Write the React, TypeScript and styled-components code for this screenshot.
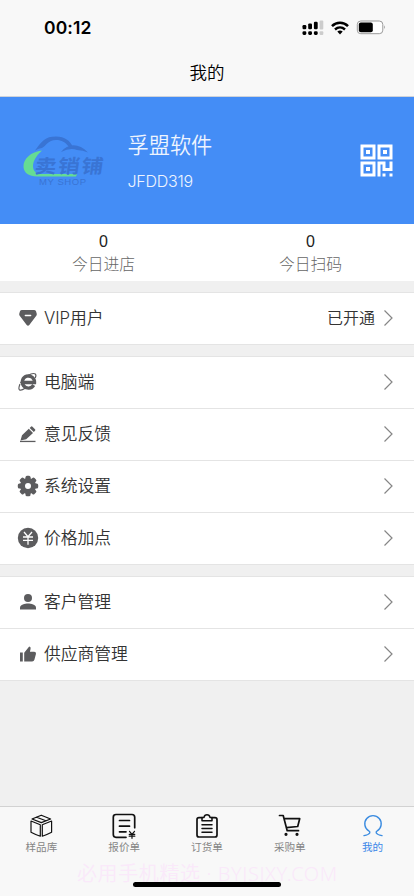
import React from 'react';
import styled, { createGlobalStyle } from 'styled-components';

const GlobalStyle = createGlobalStyle`
  * { box-sizing: border-box; }
  body {
    margin: 0;
    background: #f0f0f0;
    font-family: Inter, "Noto Sans CJK SC", sans-serif;
    font-weight: 350;
    color: #333;
  }
`;

const Screen = styled.div`
  width: 414px;
  height: 896px;
  display: flex;
  flex-direction: column;
  overflow: hidden;
  background: #f0f0f0;
`;

const Header = styled.header`
  height: 97px;
  background: #f8f8f8;
  border-bottom: 1px solid #cfd3da;
`;

const StatusBar = styled.div`
  height: 50px;
  padding: 5px 28px 0 44px;
  display: flex;
  align-items: center;
  justify-content: space-between;
`;

const Clock = styled.span`
  font: 600 17.5px/22px Inter, sans-serif;
  letter-spacing: 0.1px;
  color: #000;
`;

const StatusIcons = styled.div`
  display: flex;
  align-items: center;
  gap: 7px;
`;

const PageTitle = styled.h1`
  margin: 0;
  font-size: 17.5px;
  font-weight: 350;
  line-height: 46px;
  text-align: center;
  color: #000;
`;

const Banner = styled.section`
  height: 127px;
  background: #448df6;
  display: flex;
  align-items: center;
  padding: 0 21px 0 23px;
`;

const Profile = styled.div`
  flex: 1;
  padding: 1px 0 0 22.5px;
  color: #eef4fe;
`;

const ShopName = styled.div`
  font-size: 21.2px;
  line-height: 30px;
`;

const ShopCode = styled.div`
  margin-top: 9px;
  font: 300 16px/24px Inter, sans-serif;
  letter-spacing: -0.25px;
`;

const Stats = styled.section`
  height: 57px;
  display: grid;
  grid-template-columns: 1fr 1fr;
  background: #fff;
  text-align: center;
`;

const StatValue = styled.div`
  padding-top: 7px;
  font: 400 16px/21px "Liberation Sans", sans-serif;
  color: #222;
`;

const StatLabel = styled.div`
  font-size: 15.8px;
  font-weight: 300;
  line-height: 25px;
  color: #666;
`;

const Group = styled.section`
  margin-top: 11px;
  border-top: 1px solid #e4e4e4;
  background: #fff;
`;

const Row = styled.div`
  height: 52px;
  padding: 0 20px 1px 17px;
  display: flex;
  align-items: center;
  border-bottom: 1px solid #e4e4e4;
`;

const RowIcon = styled.span`
  width: 22px;
  height: 22px;
  margin-right: 5px;
  display: flex;
  color: #5c5c5e;
`;

const RowLabel = styled.span`
  flex: 1;
  font-size: 16.8px;
  letter-spacing: -0.05px;
  line-height: 26px;
`;

const RowValue = styled.span`
  margin-right: 9px;
  font-size: 16px;
  line-height: 26px;
`;

const TabBar = styled.nav`
  margin-top: auto;
  position: relative;
  height: 90px;
  display: grid;
  grid-template-columns: repeat(5, 1fr);
  background: #f8f8f8;
  border-top: 1px solid #d2d2d2;
`;

const Tab = styled.div<{ $active?: boolean }>`
  padding-top: 6px;
  display: flex;
  flex-direction: column;
  align-items: center;
  color: ${(p) => (p.$active ? '#3a8be0' : '#111')};
`;

const TabLabel = styled.span<{ $active?: boolean }>`
  font-size: 10.6px;
  font-weight: 400;
  line-height: 15px;
  color: ${(p) => (p.$active ? '#3a86e8' : '#858585')};
`;

const Watermark = styled.div`
  position: absolute;
  left: 77px;
  top: 53px;
  font: 350 20px/28px "Noto Sans", "Noto Sans CJK SC", sans-serif;
  letter-spacing: 0.6px;
  white-space: nowrap;
  color: #fae9fa;
`;

const HomeIndicator = styled.div`
  position: absolute;
  left: 133px;
  bottom: 9px;
  width: 148px;
  height: 5px;
  border-radius: 3px;
  background: #000;
`;

const Signal = () => (
  <svg width="22" height="16" viewBox="0 0 22 16">
    {[0, 5.7, 11.4].map((x, i) => (
      <g key={x}>
        <rect x={x + 0.5} y="11.2" width="3.8" height="3.7" rx="1.3" />
        <rect x={x + 0.5} y={5 - i * 1.6} width="3.8" height={4.3 + i * 1.6} rx="1.2" />
      </g>
    ))}
    <rect x="17.6" y="0.5" width="3.7" height="9" rx="1" fill="#ccc" />
    <rect x="17.6" y="11.2" width="3.7" height="3.7" rx="1" fill="#ccc" />
  </svg>
);

const Wifi = () => (
  <svg width="18" height="14" viewBox="0 0 18 14" fill="none" stroke="#000">
    <path d="M1 5.1C5.5.7 12.5.7 17 5.1" strokeWidth="2.6" />
    <path d="M4 8.5C7 5.7 11 5.7 14 8.5" strokeWidth="2.4" />
    <path d="M9 13.5L6.3 10.6Q9 8.6 11.7 10.6Z" fill="#000" stroke="none" />
  </svg>
);

const Battery = () => (
  <svg width="30" height="15" viewBox="0 0 30 15">
    <rect x="1.3" y="1" width="25.5" height="12.7" rx="3.5" fill="#fff" stroke="#999" />
    <rect x="2.8" y="2.5" width="14" height="9.7" rx="2" />
    <path d="M28 5.3Q29.8 7.3 28 9.3Z" fill="#888" />
  </svg>
);

const ShopLogo = () => (
  <svg width="82" height="56" viewBox="0 0 82 56" overflow="visible">
    <g fill="#3974d4">
      <path d="M12 17.500C19 8 22 3.500 33 3.500C42 3.500 47 8 49.500 13L46 14C42 9 39 7 33 7C25 7 23 13 19 15Q16 15 12 17.500Z" />
      <path d="M38 19C45 10 56 10 65 19.500Q60 17 54 17Q47 14.500 38 19Z" />
    </g>
    <path
      d="M19 17.500C8 18.500 0 26 .5 34C1 40 6 43.500 14 43.500H53L54 41H18C8.500 40.500 6 29 19 17.500Z"
      fill="#65dc94"
    />
    <text
      transform="translate(11 39.500) skewX(-8) scale(1.14 1)"
      fontFamily="Noto Sans CJK SC, sans-serif"
      fontSize="19"
      fontWeight="700"
      letterSpacing="1.5"
      fill="#3974d4"
    >
      卖销铺
    </text>
    <text x="16" y="52" fontFamily="Liberation Sans, sans-serif" fontSize="9.5" textLength="47" fill="#3974d4">
      MY SHOP
    </text>
  </svg>
);

const QrCode = () => (
  <svg width="33" height="33" viewBox="0 0 33 33" fill="none" stroke="#fff" strokeWidth="3">
    <path d="M2 2h12v12H2zM19 2h12v12H19zM2 19h12v12H2z" />
    <path d="M6 6h4v4H6zM23 6h4v4h-4zM6 23h4v4H6zM22.5 29.5h3v3h-3zM29.5 29.5h3v3h-3z" fill="#fff" stroke="none" />
    <path d="M19 32.500V19h5v6.500H31v-8" />
  </svg>
);

const Chevron = () => (
  <svg width="10" height="18" viewBox="0 0 10 18" fill="none" stroke="#868686" strokeWidth="1.2">
    <path d="M.5 1.500L8 9L.5 16.500" />
  </svg>
);

const Glyph = ({ children }: { children: React.ReactNode }) => (
  <svg width="22" height="22" viewBox="0 0 22 22" fill="currentColor">
    {children}
  </svg>
);

const Diamond = () => (
  <Glyph>
    <path d="M5 3h12q1.500 0 2 1.300l.7 2.200q.4 1.500-.6 2.600L12.300 18q-1.300 1.500-2.600 0L2.900 9.100q-1-1.100-.6-2.600L3 4.300q.5-1.300 2-1.300Z" />
    <path d="M8.300 8.500h5.400" stroke="#fff" strokeWidth="1.300" strokeLinecap="round" />
  </Glyph>
);

const Browser = () => (
  <Glyph>
    <path
      d="M16.700 14.100A6.100 6.100 0 1 1 17.500 11.500H7"
      fill="none"
      stroke="currentColor"
      strokeWidth="3.4"
    />
    <path
      d="M3.500 12C7 6.500 15 .7 18.400 3.100Q19.500 4.100 18.200 7M3 13Q1 18 2.600 18.900Q4.300 19.900 8 17.300"
      fill="none"
      stroke="currentColor"
      strokeWidth="1.2"
    />
  </Glyph>
);

const Pencil = () => (
  <Glyph>
    <path d="M3.500 17.500l1.500-5.200 6.800-6.600 4.200 4.200-6.800 6.300ZM12.700 4.900l1.200-1.200q.8-.7 1.600 0l2.500 2.500q.8.800 0 1.600l-1.200 1.200Z" />
    <path d="M3 17.800h15.500v1.300H3z" />
  </Glyph>
);

const Gear = () => (
  <Glyph>
    {[0, 45, 90, 135, 180, 225, 270, 315].map((angle) => (
      <rect key={angle} x="8.500" y="0.8" width="5" height="6" rx="1.5" transform={`rotate(${angle} 11 11)`} />
    ))}
    <circle cx="11" cy="11" r="5.5" fill="none" stroke="currentColor" strokeWidth="5" />
  </Glyph>
);

const Yen = () => (
  <Glyph>
    <circle cx="11" cy="11" r="10.2" />
    <path d="M7 5l4 4.700L15 5M6 10h10M6 13.400h10M11 9.700v8" fill="none" stroke="#fff" strokeWidth="1.3" />
  </Glyph>
);

const Person = () => (
  <Glyph>
    <circle cx="11" cy="7" r="4" />
    <path d="M3 18.500v-2C3 13.500 8 12.400 11 12.400s8 1.100 8 4.100v2Z" />
  </Glyph>
);

const Thumb = () => (
  <Glyph>
    <path d="M3 9.500h2.800v9H3zM7.200 9.700l5-6.300q1.900.5 1.400 2.300l-.7 3h4.300q2 0 1.800 2l-1.600 6q-.5 1.800-2.300 1.800H7.200Z" />
  </Glyph>
);

const TabIcon = ({ children }: { children: React.ReactNode }) => (
  <svg
    width="28"
    height="27"
    viewBox="0 0 28 27"
    fill="none"
    stroke="currentColor"
    strokeWidth="1.2"
    strokeLinecap="round"
    strokeLinejoin="round"
  >
    {children}
  </svg>
);

const Cube = () => (
  <TabIcon>
    <path d="M14.300 2.200l9.300 3.800-9.300 3.600L5 6ZM4 8l9.300 3.700v11.500Q8 21.500 4 19.300ZM24.600 8l-9.300 3.700v11.500Q20.500 21.500 24.600 19.300ZM9.600 4.200l9.300 3.600" />
  </TabIcon>
);

const Quote = () => (
  <TabIcon>
    <path d="M16 24.300H6q-2.700 0-2.700-2.700V4.200q0-2.700 2.700-2.700h16q2.700 0 2.700 2.700v10.500" strokeWidth="1.7" />
    <path d="M9.500 7.500h10M9.500 13.200h10M9.500 18.800h6.500" strokeWidth="1.7" />
    <path d="M19.500 18.300l2.500 3 2.500-3M19.200 21.300h5.600M19.200 23.200h5.600M22 21.300v4" strokeWidth="1.2" />
  </TabIcon>
);

const Clipboard = () => (
  <TabIcon>
    <path d="M9 4.700H6q-2 0-2 2V22q0 2 2 2h16q2 0 2-2V6.700q0-2-2-2h-3" strokeWidth="1.7" />
    <path d="M9 7.700V4.400h2Q11.500 1.700 14 1.700t3 2.700h2v3.300ZM9 11.700h10M9 15.500h10M9 19.300h10" strokeWidth="1.5" />
  </TabIcon>
);

const Cart = () => (
  <TabIcon>
    <path d="M3.500 2.500h3.700l4 15.200h11.300M8.200 5.700h15.500L21.700 13.500 10.300 14.600" strokeWidth="1.7" />
    <circle cx="10" cy="21.300" r="1" fill="currentColor" />
    <circle cx="21" cy="21.300" r="1" fill="currentColor" />
  </TabIcon>
);

const Member = () => (
  <TabIcon>
    <path d="M5 22.600q4.500-.7 5.700-2.600q.7-1-1-2.200A8.200 8.200 0 1 1 18.300 17.800q-1.700 1.200-1 2.200q1.200 1.900 5.700 2.600" strokeWidth="1.4" />
  </TabIcon>
);

type MenuRow = { label: string; value?: string; Icon: () => React.ReactElement };

const groups: MenuRow[][] = [
  [{ label: 'VIP用户', value: '已开通', Icon: Diamond }],
  [
    { label: '电脑端', Icon: Browser },
    { label: '意见反馈', Icon: Pencil },
    { label: '系统设置', Icon: Gear },
    { label: '价格加点', Icon: Yen },
  ],
  [
    { label: '客户管理', Icon: Person },
    { label: '供应商管理', Icon: Thumb },
  ],
];

const tabs = [
  { label: '样品库', Icon: Cube },
  { label: '报价单', Icon: Quote },
  { label: '订货单', Icon: Clipboard },
  { label: '采购单', Icon: Cart },
  { label: '我的', Icon: Member, active: true },
];

const stats = [
  { label: '今日进店', value: 0 },
  { label: '今日扫码', value: 0 },
];

export default function App() {
  return (
    <Screen>
      <GlobalStyle />
      <Header>
        <StatusBar>
          <Clock>00:12</Clock>
          <StatusIcons>
            <Signal />
            <Wifi />
            <Battery />
          </StatusIcons>
        </StatusBar>
        <PageTitle>我的</PageTitle>
      </Header>
      <Banner>
        <ShopLogo />
        <Profile>
          <ShopName>孚盟软件</ShopName>
          <ShopCode>JFDD319</ShopCode>
        </Profile>
        <QrCode />
      </Banner>
      <Stats>
        {stats.map((s) => (
          <div key={s.label}>
            <StatValue>{s.value}</StatValue>
            <StatLabel>{s.label}</StatLabel>
          </div>
        ))}
      </Stats>
      {groups.map((rows, i) => (
        <Group key={i}>
          {rows.map(({ label, value, Icon }) => (
            <Row key={label}>
              <RowIcon>
                <Icon />
              </RowIcon>
              <RowLabel>{label}</RowLabel>
              {value && <RowValue>{value}</RowValue>}
              <Chevron />
            </Row>
          ))}
        </Group>
      ))}
      <TabBar>
        {tabs.map(({ label, Icon, active }) => (
          <Tab key={label} $active={active}>
            <Icon />
            <TabLabel $active={active}>{label}</TabLabel>
          </Tab>
        ))}
        <Watermark>必用手机精选 · BYJSJXY.COM</Watermark>
        <HomeIndicator />
      </TabBar>
    </Screen>
  );
}
